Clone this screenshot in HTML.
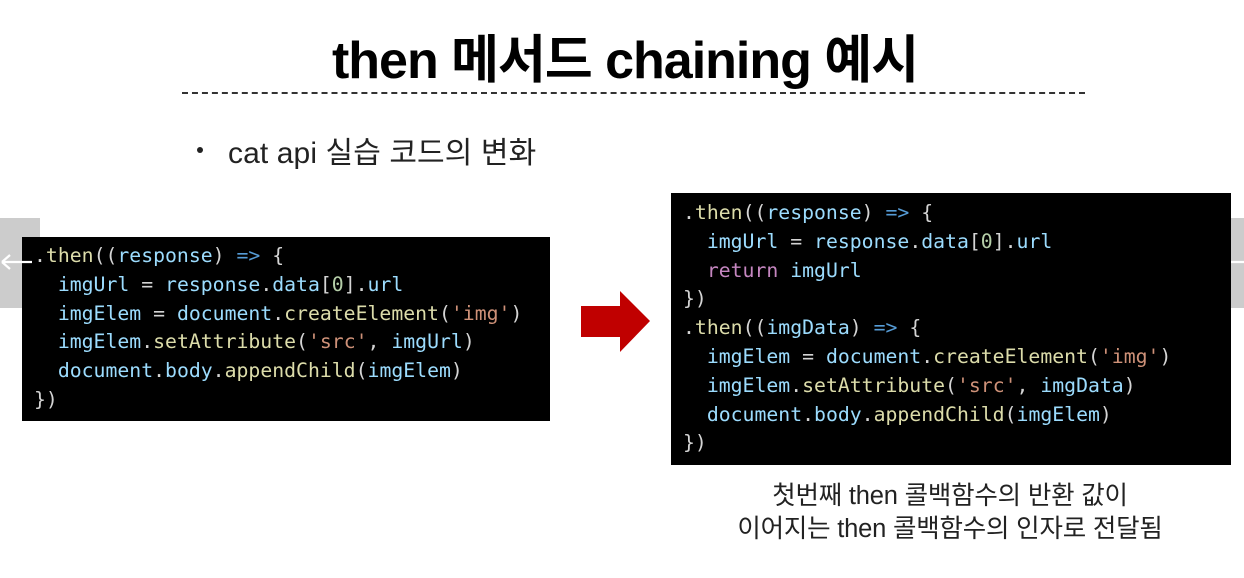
<!DOCTYPE html>
<html><head><meta charset="utf-8"><style>
html,body{margin:0;padding:0;background:#fff;width:1244px;height:578px;overflow:hidden;position:relative}
.k{font-family:"Liberation Sans","Noto Sans CJK KR",sans-serif;position:absolute;white-space:nowrap}
.code{position:absolute;background:#000;font-family:"DejaVu Sans Mono",monospace;font-size:19.8px;line-height:28.8px;color:#d4d4d4;white-space:pre;box-sizing:border-box}
.v{color:#9cdcfe}.f{color:#dcdcaa}.s{color:#ce9178}.r{color:#c586c0}.o{color:#569cd6}.n{color:#b5cea8}
</style></head><body>
<div class="k" style="left:0;width:1250px;top:18px;text-align:center;font-size:52px;font-weight:bold;letter-spacing:-1px;color:#000">then 메서드 chaining 예시</div>
<div style="position:absolute;left:182px;top:92px;width:903px;border-top:2px dashed #333"></div>
<div style="position:absolute;left:197px;top:147px;width:6px;height:6px;border-radius:50%;background:#222"></div>
<div class="k" style="left:228px;top:128px;font-size:30px;color:#222;letter-spacing:0.1px">cat api 실습 코드의 변화</div>

<div style="position:absolute;left:0;top:218px;width:40px;height:90px;background:#ccc"></div>
<div style="position:absolute;left:1230px;top:218px;width:14px;height:90px;background:#ccc"></div>

<div class="code" style="left:22px;top:237px;width:528px;height:184px;padding:5px 0 0 12px">.<span class="f">then</span>((<span class="v">response</span>) <span class="o">=&gt;</span> {
  <span class="v">imgUrl</span> = <span class="v">response</span>.<span class="v">data</span>[<span class="n">0</span>].<span class="v">url</span>
  <span class="v">imgElem</span> = <span class="v">document</span>.<span class="f">createElement</span>(<span class="s">'img'</span>)
  <span class="v">imgElem</span>.<span class="f">setAttribute</span>(<span class="s">'src'</span>, <span class="v">imgUrl</span>)
  <span class="v">document</span>.<span class="v">body</span>.<span class="f">appendChild</span>(<span class="v">imgElem</span>)
})</div>
<svg style="position:absolute;left:0;top:250px" width="34" height="24"><path d="M2 12 H32 M2 12 L10 5 M2 12 L10 19" stroke="#fff" stroke-width="2.2" fill="none"/></svg>
<svg style="position:absolute;left:1222px;top:252px" width="22" height="20"><path d="M2 10 H22" stroke="#fff" stroke-width="2.2"/></svg>

<svg style="position:absolute;left:580px;top:290px" width="72" height="64"><polygon points="1,16 40,16 40,1 70,31 40,62 40,47 1,47" fill="#c00000"/></svg>

<div class="code" style="left:671px;top:193px;width:560px;height:272px;padding:6px 0 0 12px">.<span class="f">then</span>((<span class="v">response</span>) <span class="o">=&gt;</span> {
  <span class="v">imgUrl</span> = <span class="v">response</span>.<span class="v">data</span>[<span class="n">0</span>].<span class="v">url</span>
  <span class="r">return</span> <span class="v">imgUrl</span>
})
.<span class="f">then</span>((<span class="v">imgData</span>) <span class="o">=&gt;</span> {
  <span class="v">imgElem</span> = <span class="v">document</span>.<span class="f">createElement</span>(<span class="s">'img'</span>)
  <span class="v">imgElem</span>.<span class="f">setAttribute</span>(<span class="s">'src'</span>, <span class="v">imgData</span>)
  <span class="v">document</span>.<span class="v">body</span>.<span class="f">appendChild</span>(<span class="v">imgElem</span>)
})</div>

<div class="k" style="left:650px;width:600px;top:480px;text-align:center;font-size:25.5px;line-height:33px;color:#222;letter-spacing:-0.2px">첫번째 then 콜백함수의 반환 값이<br>이어지는 then 콜백함수의 인자로 전달됨</div>
</body></html>
